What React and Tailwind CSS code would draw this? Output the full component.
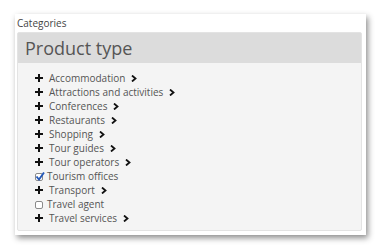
const items = [
  { label: 'Accommodation', type: 'group' },
  { label: 'Attractions and activities', type: 'group' },
  { label: 'Conferences', type: 'group' },
  { label: 'Restaurants', type: 'group' },
  { label: 'Shopping', type: 'group' },
  { label: 'Tour guides', type: 'group' },
  { label: 'Tour operators', type: 'group' },
  { label: 'Tourism offices', type: 'check', checked: true },
  { label: 'Transport', type: 'group' },
  { label: 'Travel agent', type: 'check', checked: false },
  { label: 'Travel services', type: 'group' },
];

const Plus = () => (
  <svg width="8" height="8" viewBox="0 0 8 8" className="shrink-0">
    <path d="M3 0h2v3h3v2H5v3H3V5H0V3h3z" fill="#111" />
  </svg>
);

const Chevron = () => (
  <svg width="6" height="7" viewBox="0 0 6 7" className="shrink-0">
    <path d="M1 0.5L4.5 3.5L1 6.5" fill="none" stroke="#111" strokeWidth="1.8" />
  </svg>
);

const Check = ({ checked }) => (
  <span className="w-[8px] h-[8px] mt-[4px] rounded-[2px] border border-[#8a8a8a] bg-white shrink-0 relative">
    {checked && (
      <svg width="10" height="10" viewBox="0 0 10 10" className="absolute -left-[1px] -top-[3px]">
        <path d="M1.5 5.5L4 8.5L9 1.5" fill="none" stroke="#2458b8" strokeWidth="1.9" />
      </svg>
    )}
  </span>
);

export default function App() {
  return (
    <div className="w-[383px] h-[249px] bg-white pt-[14px] pl-[15px]" style={{ fontFamily: '"Open Sans", sans-serif' }}>
      <div className="w-[351px] h-[221px] bg-white shadow-[2px_3px_6px_rgba(0,0,0,0.45)] pl-[2px] pr-[4px]">
        <div className="text-[10px] leading-[18px] text-[#444]">Categories</div>
        <div className="h-[199px] rounded-[2px] border border-[#e3e3e3] bg-[#f4f4f4]">
          <div className="h-[30px] bg-[#dcdcdc] pl-[7px] text-[18px] leading-[30px] text-[#555]">Product type</div>
          <ul className="pt-[8px] pl-[17px]">
            {items.map(item => (
              <li key={item.label} className="h-[14px] flex items-start text-[10px] leading-[14px] text-[#555]">
                {item.type === 'group' ? (
                  <>
                    <span className="mt-[3px] mr-[6px] flex"><Plus /></span>
                    <span>{item.label}</span>
                    <span className="ml-[6px] mt-[4px] flex"><Chevron /></span>
                  </>
                ) : (
                  <>
                    <Check checked={item.checked} />
                    <span className="ml-[4px]">{item.label}</span>
                  </>
                )}
              </li>
            ))}
          </ul>
        </div>
      </div>
    </div>
  );
}
